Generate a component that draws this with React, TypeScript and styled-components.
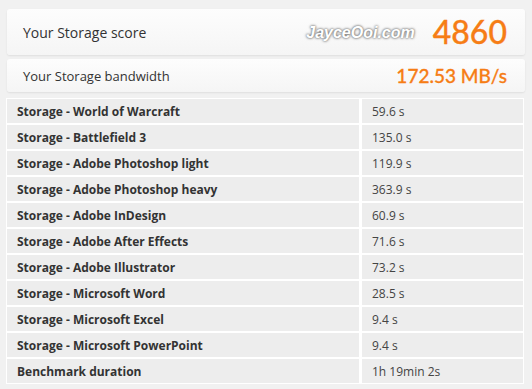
import React, {FC} from 'react';
import styled, {createGlobalStyle} from 'styled-components';

const GlobalStyle = createGlobalStyle`
	html, body {
		margin: 0;
		padding: 0;
		background: #f1f1f1;
	}
`;

const Page = styled.div`
	width: 532px;
	height: 389px;
	box-sizing: border-box;
	padding: 9px 7px 0 7px;
	font-family: "Open Sans", "DejaVu Sans", sans-serif;
	color: #333;
	overflow: hidden;
`;

const ScoreCard = styled.div<{tall?: boolean}>`
	display: flex;
	align-items: center;
	justify-content: space-between;
	height: ${p => (p.tall ? '46px' : '33px')};
	margin-bottom: ${p => (p.tall ? '4px' : '6px')};
	padding: 0 18px 0 16px;
	border-radius: 3px;
	background: linear-gradient(to bottom, #fdfdfd, #f5f5f5);
	box-shadow: 0 1px 2px rgba(0, 0, 0, 0.08);
`;

const ScoreLabel = styled.span<{small?: boolean}>`
	font-size: ${p => (p.small ? '13px' : '14px')};
	color: #333;
`;

const Right = styled.div`
	display: flex;
	align-items: center;
	gap: 18px;
`;

const Watermark = styled.span`
	font-family: "Liberation Sans", Arial, sans-serif;
	font-style: italic;
	font-weight: bold;
	font-size: 16px;
	color: #fff;
	text-shadow: 0 0 3px #666, 0 0 2px #888;
	margin-top: 2px;
`;

const Score = styled.span<{size: number}>`
	font-family: Lato, "Open Sans", sans-serif;
	font-size: ${p => p.size}px;
	font-weight: 500;
	color: #f67d15;
	line-height: 1;
	-webkit-text-stroke: 0.3px #f67d15;
`;

const Table = styled.div`
	display: grid;
	grid-template-columns: 352px 1fr;
	gap: 2px 3px;
	margin-left: -1px;
	margin-right: 1px;
	background: #fff;
	border: 1px solid #fff;
`;

const Cell = styled.div<{bold?: boolean}>`
	height: 24px;
	display: flex;
	align-items: center;
	padding-left: 10px;
	background: #ededed;
	font-size: 12px;
	font-weight: ${p => (p.bold ? 700 : 400)};
	color: ${p => (p.bold ? '#333' : '#444')};
`;

const rows: [string, string][] = [
	['Storage - World of Warcraft', '59.6 s'],
	['Storage - Battlefield 3', '135.0 s'],
	['Storage - Adobe Photoshop light', '119.9 s'],
	['Storage - Adobe Photoshop heavy', '363.9 s'],
	['Storage - Adobe InDesign', '60.9 s'],
	['Storage - Adobe After Effects', '71.6 s'],
	['Storage - Adobe Illustrator', '73.2 s'],
	['Storage - Microsoft Word', '28.5 s'],
	['Storage - Microsoft Excel', '9.4 s'],
	['Storage - Microsoft PowerPoint', '9.4 s'],
	['Benchmark duration', '1h 19min 2s'],
];

const App: FC = () =>
	<Page>
		<GlobalStyle />
		<ScoreCard tall>
			<ScoreLabel>Your Storage score</ScoreLabel>
			<Right>
				<Watermark>JayceOoi.com</Watermark>
				<Score size={32}>4860</Score>
			</Right>
		</ScoreCard>
		<ScoreCard>
			<ScoreLabel small>Your Storage bandwidth</ScoreLabel>
			<Score size={19}>172.53 MB/s</Score>
		</ScoreCard>
		<Table>
			{rows.map(([label, value]) =>
				<React.Fragment key={label}>
					<Cell bold>{label}</Cell>
					<Cell>{value}</Cell>
				</React.Fragment>
			)}
		</Table>
	</Page>;

export default App;
